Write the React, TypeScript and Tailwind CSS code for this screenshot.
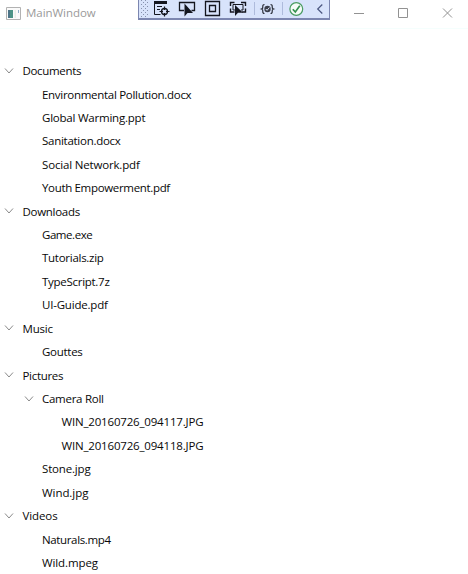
import React from "react";

type Item = { label: string; depth: 0 | 1 | 2; open?: boolean; tracking?: string };

const items: Item[] = [
  { label: "Documents", depth: 0, open: true, tracking: "tracking-[-0.33px]" },
  { label: "Environmental Pollution.docx", depth: 1, tracking: "tracking-[-0.29px]" },
  { label: "Global Warming.ppt", depth: 1, tracking: "tracking-[-0.22px]" },
  { label: "Sanitation.docx", depth: 1, tracking: "tracking-[-0.27px]" },
  { label: "Social Network.pdf", depth: 1, tracking: "tracking-[-0.17px]" },
  { label: "Youth Empowerment.pdf", depth: 1, tracking: "tracking-[-0.33px]" },
  { label: "Downloads", depth: 0, open: true, tracking: "tracking-[-0.28px]" },
  { label: "Game.exe", depth: 1, tracking: "tracking-[-0.44px]" },
  { label: "Tutorials.zip", depth: 1, tracking: "tracking-[-0.27px]" },
  { label: "TypeScript.7z", depth: 1, tracking: "tracking-[-0.28px]" },
  { label: "UI-Guide.pdf", depth: 1, tracking: "tracking-[-0.2px]" },
  { label: "Music", depth: 0, open: true, tracking: "tracking-[-0.2px]" },
  { label: "Gouttes", depth: 1, tracking: "tracking-[-0.28px]" },
  { label: "Pictures", depth: 0, open: true, tracking: "tracking-[-0.31px]" },
  { label: "Camera Roll", depth: 1, open: true, tracking: "tracking-[-0.27px]" },
  { label: "WIN_20160726_094117.JPG", depth: 2, tracking: "tracking-[-0.18px]" },
  { label: "WIN_20160726_094118.JPG", depth: 2, tracking: "tracking-[-0.18px]" },
  { label: "Stone.jpg", depth: 1, tracking: "tracking-[-0.17px]" },
  { label: "Wind.jpg", depth: 1, tracking: "tracking-[-0.06px]" },
  { label: "Videos", depth: 0, open: true, tracking: "tracking-[-0.1px]" },
  { label: "Naturals.mp4", depth: 1, tracking: "tracking-[-0.36px]" },
  { label: "Wild.mpeg", depth: 1, tracking: "tracking-[-0.11px]" },
];

const indent = ["pl-[4px]", "pl-[23.5px]", "pl-[43px]"];

function Toolbar() {
  return (
    <div className="h-[20px] w-[192px] border-x border-b-2 border-[#7c86b0] bg-[#d8e3fb]">
      <svg className="block" width="190" height="18" viewBox="139 0 190 18" fill="none">
        <g fill="#8791ad">
          {[0, 1, 2, 3, 4, 5, 6, 7, 8].map((r) => (
            <React.Fragment key={r}>
              <rect x={r % 2 ? 143 : 141} y={r * 2} width="1" height="1" />
              <rect x={r % 2 ? 147 : 145} y={r * 2} width="1" height="1" />
            </React.Fragment>
          ))}
        </g>
        {/* live visual tree */}
        <g stroke="#14161f">
          <path d="M154 2.500h13" strokeWidth="3" />
          <path d="M154.500 2v12.500h6M157 6.500h5M157 9.500h3" />
          <circle cx="164.500" cy="11.500" r="3" strokeWidth="1.300" />
          <path d="M164.500 6.500v3.500M164.500 13v3.500M159.500 11.500h3.500M166 11.500h3.500" strokeWidth="1.200" />
        </g>
        {/* select element */}
        <path d="M184 10.500h-4.500v-8h15v8h-3" stroke="#14161f" strokeWidth="1.300" />
        <path d="M184.500 3.500v13l3-3.500h5.500z" fill="#14161f" />
        {/* layout adorners */}
        <path d="M205.500 1.500h14v14h-14z" stroke="#14161f" strokeWidth="1.300" />
        <path d="M209.500 5.500h6v6h-6z" stroke="#14161f" strokeWidth="1.300" />
        {/* track focused element */}
        <path d="M230.500 6V2.500h4M241 2.500h4.500V6M230.500 8.500V12h4M242 12h3.500V8.500" stroke="#14161f" strokeWidth="1.400" />
        <path d="M235 10h-2V4.500h10V10h-2" stroke="#14161f" />
        <path d="M235 5v11l3-3.200h5z" fill="#14161f" />
        <path d="M254.500 2v13M282.500 2v13" stroke="#aebbdc" />
        {/* binding failures */}
        <path d="M264.500 4.500q-2 0-1.700 2.500.2 1.500-1.300 2 1.500.5 1.300 2-.3 2.500 1.700 2.500M270.500 4.500q2 0 1.700 2.500-.2 1.500 1.300 2-1.500.5-1.300 2 .3 2.500-1.700 2.500" stroke="#2c303b" strokeWidth="1.200" />
        <circle cx="267.500" cy="9" r="3.200" fill="#3b3f4c" />
        <path d="M265.800 9l1.300 1.300 2.300-2.800" stroke="#dce5fa" />
        {/* hot reload status */}
        <circle cx="296.300" cy="9" r="6.400" fill="#f5fbf7" stroke="#4a9c62" strokeWidth="1.200" />
        <path d="M292.800 9.200l2.500 2.800 4.500-6.300" stroke="#35914f" strokeWidth="1.700" />
        <path d="M322.300 4.500l-4.600 4.500 4.600 4.500" stroke="#4b5780" strokeWidth="1.200" />
      </svg>
    </div>
  );
}

export default function App() {
  return (
    <div className="flex h-[574px] w-[468px] flex-col overflow-hidden bg-white font-['Open_Sans','Noto_Sans',sans-serif] text-[11.500px]">
      <header className="flex h-[29px] shrink-0 border-b border-[#f5fefd]">
        <div className="flex h-[26px] w-[138px] items-center pl-[6px] text-[#9a9a9a]">
          <svg width="15" height="13" viewBox="0 0 15 13">
            <path d="M.5.5h14v12H.5z" fill="#fafafa" stroke="#b2b2b2" />
            <rect x="2" y="3" width="5" height="8" fill="#4c9386" />
            <rect x="2" y="3" width="2" height="8" fill="#4d7588" />
            <path d="M8.500 3h1.500v8H8.500z" fill="#e7eee7" />
            <path d="M12 3h1v3h-1z" fill="#8faec9" />
          </svg>
          <span className="ml-[5px] whitespace-nowrap tracking-[-0.05px]">MainWindow</span>
        </div>
        <Toolbar />
        <div className="flex h-[26px] items-center pl-[24px]">
          <svg width="104" height="12" viewBox="354 7 104 12" fill="none" stroke="#929292">
            <path d="M354 13.500h10M398.500 8.500h9v9h-9zM443 8.500l9 9M452 8.500l-9 9" />
          </svg>
        </div>
      </header>
      <main className="pt-[30px]">
        {items.map((item) => (
          <div
            key={item.label}
            className={`flex h-[23.430px] items-center whitespace-nowrap text-[#080808] ${indent[item.depth]}`}
          >
            <span className="flex w-[18.500px] shrink-0">
              {item.open && (
                <svg width="10" height="8" viewBox="0 0 10 8" fill="none" stroke="#8a8a8a">
                  <path d="M1 1.500l4 4.500 4-4.500" />
                </svg>
              )}
            </span>
            <span className={item.tracking}>{item.label}</span>
          </div>
        ))}
      </main>
    </div>
  );
}
